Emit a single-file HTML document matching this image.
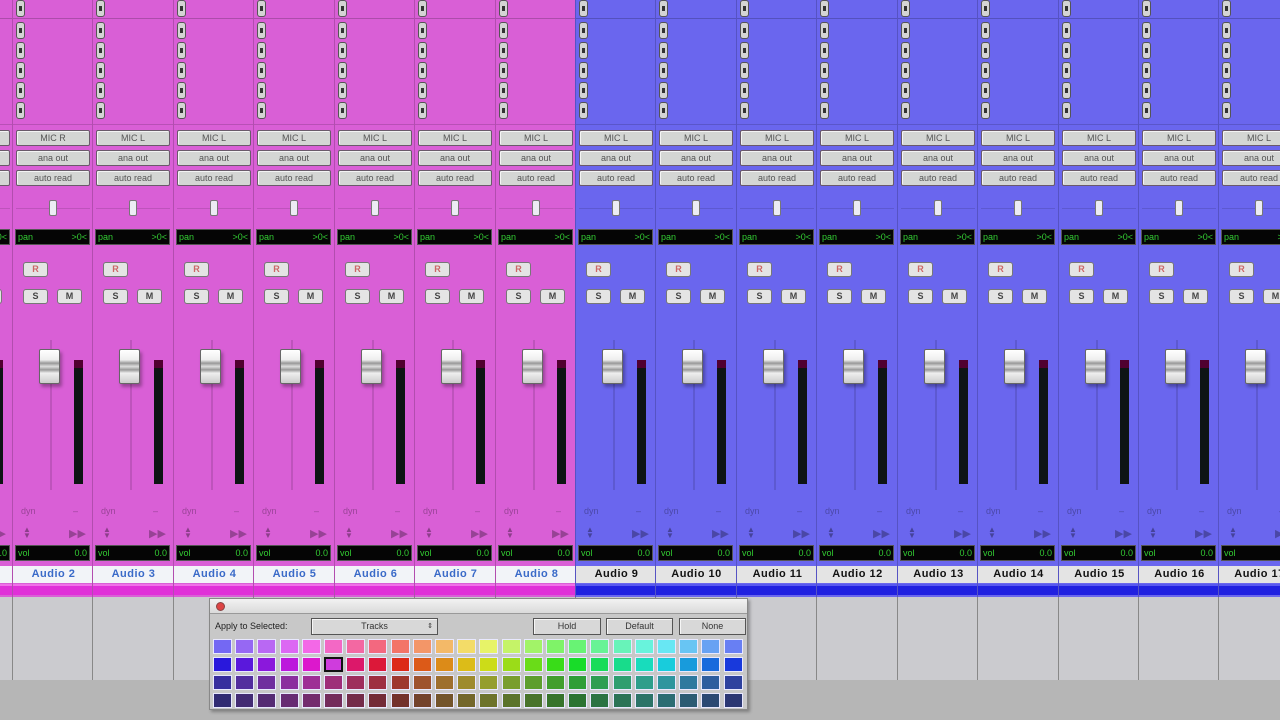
<!DOCTYPE html>
<html><head><meta charset="utf-8"><style>
*{box-sizing:border-box;margin:0;padding:0}
body{width:1280px;height:720px;overflow:hidden;background:#b6b6b6;position:relative;font-family:"Liberation Sans",sans-serif}
.s{position:absolute;top:0;width:81px;height:597px;border-left:1px solid rgba(0,0,0,.18)}
.p{background:#d95fd6}.u{background:#6a66ee}
.top{position:absolute;left:0;top:18px;width:81px;height:1px;background:rgba(0,0,0,.2)}
.sep{position:absolute;left:0;top:124px;width:81px;height:1px;background:rgba(0,0,0,.15)}
.ib{position:absolute;left:3px;width:9px;height:17px;background:#d4d4d4;border:1px solid #555;border-radius:3px}
.ib:after{content:"";position:absolute;left:2px;top:5px;width:3px;height:5px;background:#333}
.b{position:absolute;left:3px;width:74px;height:16px;background:#d4d6d4;border:1px solid #6a5a6a;border-radius:2px;font-size:9px;line-height:14px;text-align:center;color:#555;box-shadow:inset 1px 1px 0 #f4f4f4}
.pk{position:absolute;left:36px;top:200px;width:8px;height:16px;background:#ececf4;border:1px solid #777;border-radius:2px}
.pl{position:absolute;left:3px;top:208px;width:74px;height:1px;background:rgba(0,0,0,.12)}
.d{position:absolute;left:2px;width:75px;height:16px;background:#050505;border:1px solid #555;color:#3c3;font-size:9px;line-height:14px;padding:0 2px;display:flex;justify-content:space-between}
.r,.sb,.m{position:absolute;width:25px;height:15px;background:#e4e4e4;border:1px solid #777;border-radius:3px;font-size:9px;font-weight:bold;line-height:13px;text-align:center;color:#444}
.r{left:10px;top:262px;color:#c66}
.sb{left:10px;top:289px}.m{left:44px;top:289px}
.ft{position:absolute;left:37px;top:340px;width:2px;height:150px;background:rgba(0,0,0,.12)}
.fk{position:absolute;left:26px;top:349px;width:21px;height:35px;border:1px solid #666;border-radius:2px;background:linear-gradient(#fff 0,#eee 30%,#999 40%,#ddd 50%,#999 60%,#eee 70%,#ccc 100%);box-shadow:2px 3px 3px rgba(0,0,0,.3)}
.mt{position:absolute;left:61px;top:360px;width:9px;height:124px;background:#0e1414;border-top:8px solid #500030}
.dy{position:absolute;left:8px;top:506px;font-size:9px;color:rgba(0,0,0,.3)}
.dy2{position:absolute;left:60px;top:506px;font-size:9px;color:rgba(0,0,0,.3)}
.ar{position:absolute;left:10px;top:527px;font-size:8px;color:rgba(0,0,0,.35);line-height:6px}
.ar2{position:absolute;left:56px;top:527px;font-size:11px;color:rgba(0,0,0,.3)}
.nm{position:absolute;left:0;top:566px;width:81px;height:17px;font-size:11px;font-weight:bold;line-height:17px;text-align:center;letter-spacing:.5px}
.p .nm{background:#f2f4f8;color:#3a6ac8}
.u .nm{background:#e4e4e4;color:#111}
.cb{position:absolute;left:0;top:584px;width:81px;height:11px}
.p .cb{background:#e030d8;border-top:2px solid #f070e8}
.u .cb{background:#2020e0;border-top:2px solid #5858f0}
.g{position:absolute;top:597px;height:83px;width:81px;background:#cbcbcf;border-left:1px solid #888}
#win{position:absolute;left:209px;top:598px;width:539px;height:112px;background:#c8c8c8;border:1px solid #888;box-shadow:2px 2px 3px rgba(0,0,0,.3)}
#tb{height:15px;background:linear-gradient(#f2f2f2,#dadada);border-bottom:1px solid #999}
#cl{position:absolute;left:6px;top:3px;width:9px;height:9px;border-radius:50%;background:#d44;border:1px solid #844}
.wb{position:absolute;top:19px;height:17px;border:1px solid #555;background:#d8d8d8;font-size:9px;text-align:center;line-height:15px;color:#333;box-shadow:inset 1px 1px 0 #f6f6f6}
#grid{position:absolute;left:3px;top:40px}
.c{position:absolute;width:19px;height:15px;border:1px solid #e8e8ff}
</style></head><body>

<div class="g" style="left:-68px"></div><div class="g" style="left:12px"></div><div class="g" style="left:92px"></div><div class="g" style="left:173px"></div><div class="g" style="left:253px"></div><div class="g" style="left:334px"></div><div class="g" style="left:414px"></div><div class="g" style="left:495px"></div><div class="g" style="left:575px"></div><div class="g" style="left:655px"></div><div class="g" style="left:736px"></div><div class="g" style="left:816px"></div><div class="g" style="left:897px"></div><div class="g" style="left:977px"></div><div class="g" style="left:1058px"></div><div class="g" style="left:1138px"></div><div class="g" style="left:1218px"></div>

<div id="strips"></div>

<div id="win"><div id="tb"><div id="cl"></div></div>
<div style="position:absolute;left:5px;top:22px;font-size:9px;color:#222">Apply to Selected:</div>
<div class="wb" style="left:101px;width:127px">Tracks<span style="position:absolute;right:4px;font-size:7px">&#8661;</span></div>
<div class="wb" style="left:323px;width:68px">Hold</div>
<div class="wb" style="left:396px;width:67px">Default</div>
<div class="wb" style="left:469px;width:67px">None</div>
<div id="grid"></div>
</div>

<script>
var lefts=[-68,12,92,173,253,334,414,495,575,655,736,816,897,977,1058,1138,1218];
var h='';
for(var k=0;k<lefts.length;k++){
 var n=k+1, pink=k<=7;
 var s='<div class="s '+(pink?'p':'u')+'" style="left:'+lefts[k]+'px"><div class="top"></div><div class="sep"></div>';
 s+='<i class="ib" style="top:0px"></i>';
 [22,42,62,82,102].forEach(function(t){s+='<i class="ib" style="top:'+t+'px"></i>'});
 s+='<div class="b" style="top:130px">'+(n<=2?'MIC R':'MIC L')+'</div><div class="b" style="top:150px">ana out</div><div class="b" style="top:170px">auto read</div>';
 s+='<div class="pl"></div><div class="pk"></div><div class="d" style="top:229px"><span>pan</span><span>&gt;0&lt;</span></div>';
 s+='<div class="r">R</div><div class="sb">S</div><div class="m">M</div>';
 s+='<div class="ft"></div><div class="mt"></div><div class="fk"></div>';
 s+='<div class="dy">dyn</div><div class="dy2">&ndash;</div><div class="ar">&#9650;<br>&#9660;</div><div class="ar2">&#9654;&#9654;</div>';
 s+='<div class="d" style="top:545px"><span>vol</span><span>0.0</span></div>';
 s+='<div class="nm">Audio '+n+'</div><div class="cb"></div></div>';
 h+=s;
}
document.getElementById('strips').innerHTML=h;
var g='';
var L=[[85,68],[80,48],[55,40],[45,31]];
for(var r=0;r<4;r++)for(var i=0;i<24;i++){
 var hu=(245+i*15)%360;
 var st='left:'+(i*22.2)+'px;top:'+(r*18)+'px;background:hsl('+hu+','+L[r][0]+'%,'+L[r][1]+'%)';
 if(r==1&&i==5)st+=';border:2px solid #111;background:hsl(295,70%,55%)';
 g+='<div class="c" style="'+st+'"></div>';
}
document.getElementById('grid').innerHTML=g;
</script>
</body></html>
